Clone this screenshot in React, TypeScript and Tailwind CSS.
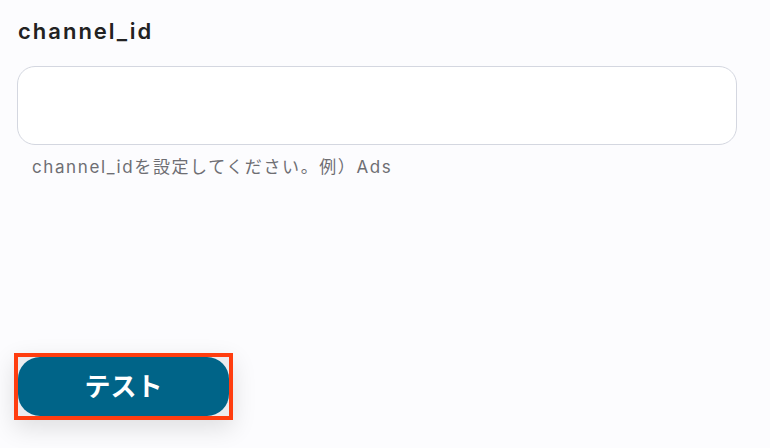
import React from "react";

export default function App() {
  return (
    <div
      className="w-[770px] h-[448px] bg-[#fcfcfe] overflow-hidden flex flex-col"
      style={{ fontFamily: "Inter, 'Noto Sans CJK JP', sans-serif" }}
    >
      <div className="pl-[18px] pt-[17px] text-[22px] leading-[28px] font-semibold tracking-[2px] text-[#222]">
        channel_id
      </div>
      <div className="ml-[17px] mt-[21px] w-[720px] h-[79px] rounded-[18px] border border-[#d4d7e0] bg-white" />
      <div className="pl-[32px] mt-[9px] text-[17px] leading-[26px] tracking-[1.6px] text-[#6e6e73]">
        channel_idを設定してください。例）Ads
      </div>
      <div className="ml-[14px] mt-[173px] w-[219px] h-[67px] border-[4px] border-[#ff3d0f] bg-[#ececef] shadow-[0_8px_24px_rgba(0,0,0,0.12)] flex">
        <div className="flex-1 rounded-[22px] bg-[#006488] flex items-center justify-center text-white text-[26px] font-bold">
          テスト
        </div>
      </div>
    </div>
  );
}
